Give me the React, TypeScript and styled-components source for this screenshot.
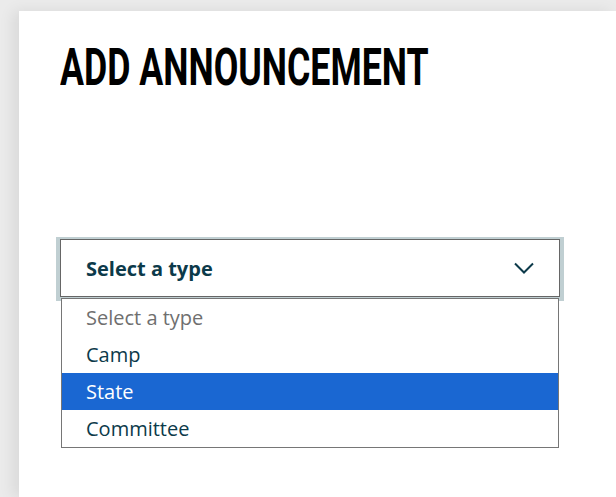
import { useState } from "react";
import styled, { createGlobalStyle } from "styled-components";

const GlobalStyle = createGlobalStyle`
  html, body {
    margin: 0;
    padding: 0;
    background: #ebebeb;
  }
  body {
    font-family: "Open Sans", "Noto Sans", sans-serif;
    overflow: hidden;
  }
`;

const Page = styled.div`
  padding: 11px 0 0 19px;
  min-height: 497px;
  box-sizing: border-box;
`;

const Card = styled.div`
  background: #fff;
  min-height: 486px;
  padding: 29px 0 0 41px;
  box-sizing: border-box;
  box-shadow: -6px 0 14px rgba(0, 0, 0, 0.08);
`;

const Title = styled.h1`
  margin: 0;
  font-family: Roboto, "Liberation Sans", sans-serif;
  font-weight: 700;
  font-size: 51px;
  line-height: 56px;
  color: #000;
  white-space: nowrap;
  transform: scaleX(0.7);
  transform-origin: left center;
`;

const Field = styled.div`
  position: relative;
  width: 500px;
  margin-top: 143px;
`;

const SelectBox = styled.div`
  height: 58px;
  box-sizing: border-box;
  border: 1px solid #666;
  display: flex;
  align-items: center;
  justify-content: space-between;
  padding: 0 25px 0 25px;
  color: #0c3a4a;
  font-weight: 700;
  font-size: 20px;
  box-shadow: 1px 1px 0 3px #c0cfd2, -1px 1px 0 3px #c0cfd2;
  cursor: pointer;
`;

const Options = styled.ul`
  position: absolute;
  left: 1px;
  right: 1px;
  top: 59px;
  margin: 0;
  padding: 0;
  list-style: none;
  background: #fff;
  border: 1px solid #767676;
`;

const Option = styled.li<{ $active?: boolean; $muted?: boolean }>`
  height: 37px;
  display: flex;
  align-items: center;
  padding-left: 24px;
  font-size: 20px;
  color: ${(p) => (p.$active ? "#fff" : p.$muted ? "#6f6f6f" : "#0c3a4a")};
  background: ${(p) => (p.$active ? "#1a67d2" : "transparent")};
`;

const Chevron = () => (
  <svg width="20" height="12" viewBox="0 0 20 12" fill="none">
    <path d="M1 1.5 L10 10.5 L19 1.5" stroke="#0c3a4a" strokeWidth="2" />
  </svg>
);

const types = ["Camp", "State", "Committee"];

export default function App() {
  const [active] = useState("State");
  return (
    <>
      <GlobalStyle />
      <Page>
        <Card>
          <Title>ADD ANNOUNCEMENT</Title>
          <Field>
            <SelectBox>
              <span>Select a type</span>
              <Chevron />
            </SelectBox>
            <Options>
              <Option $muted>Select a type</Option>
              {types.map((t) => (
                <Option key={t} $active={t === active}>
                  {t}
                </Option>
              ))}
            </Options>
          </Field>
        </Card>
      </Page>
    </>
  );
}
